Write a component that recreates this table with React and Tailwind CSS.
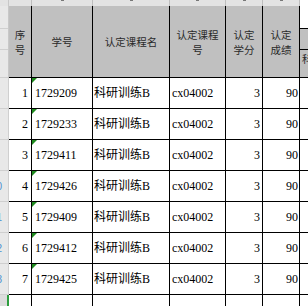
import React from "react";

const widths = ["w-[23px]", "w-[61px]", "w-[77px]", "w-[56px]", "w-[37px]", "w-[37px]"];

const rows = [
  ["1", "1729209"],
  ["2", "1729233"],
  ["3", "1729411"],
  ["4", "1729426"],
  ["5", "1729409"],
  ["6", "1729412"],
  ["7", "1729425"],
];

const serif = "font-['Liberation_Serif','Noto_Sans_CJK_SC',serif]";

function Tri() {
  return (
    <svg className="absolute left-0 top-0" width="5" height="5" viewBox="0 0 5 5">
      <polygon points="0,0 5,0 0,5" fill="#1e8a1e" />
    </svg>
  );
}

export default function App() {
  return (
    <div className="w-[308px] h-[306px] overflow-hidden bg-white flex flex-col font-['Noto_Sans_CJK_SC',sans-serif]">
      {/* column header strip */}
      <div className="flex h-[6px] shrink-0 bg-[#e3e3e3]">
        <div className="w-[9px] shrink-0 border-r border-[#c8c8c8]" />
        <div className="w-[23px] shrink-0 border-r border-[#bdbdbd]" />
        <div className="w-[61px] shrink-0 border-r border-[#bdbdbd] flex justify-center">
          <div className="w-[3px] h-[1px] bg-[#777]" />
        </div>
        <div className="w-[77px] shrink-0 border-r border-[#bdbdbd] flex justify-center">
          <div className="w-[3px] h-[1px] bg-[#777]" />
        </div>
        <div className="w-[56px] shrink-0 border-r border-[#bdbdbd] flex justify-center">
          <div className="w-[3px] h-[1px] bg-[#777]" />
        </div>
        <div className="w-[37px] shrink-0 border-r border-[#bdbdbd] flex justify-center">
          <div className="w-[3px] h-[1px] bg-[#777]" />
        </div>
        <div className="w-[37px] shrink-0 border-r border-[#bdbdbd] flex justify-center">
          <div className="w-[3px] h-[1px] bg-[#777]" />
        </div>
        <div className="flex-1 bg-white" />
      </div>

      {/* header block */}
      <div className="flex h-[72px] shrink-0 text-[10.5px] leading-[15px] text-[#2a2a2a]">
        <div className="w-[9px] shrink-0 flex flex-col bg-[#e8e8e8] border-r border-[#c8c8c8]">
          <div className="h-[23px] border-b border-[#cfcfcf]" />
          <div className="h-[21px] border-b border-[#cfcfcf]" />
          <div className="flex-1 border-b border-[#cfcfcf]" />
        </div>
        <div className="w-[23px] shrink-0 bg-[#c0c0c0] border-r border-b border-black flex items-center justify-center text-center">
          序<br />号
        </div>
        <div className="w-[61px] shrink-0 bg-[#c0c0c0] border-r border-b border-black flex items-center justify-center">
          学号
        </div>
        <div className="w-[77px] shrink-0 bg-[#c0c0c0] border-r border-b border-black flex items-center justify-center">
          认定课程名
        </div>
        <div className="w-[56px] shrink-0 bg-[#c0c0c0] border-r border-b border-black flex items-center justify-center text-center">
          认定课程<br />号
        </div>
        <div className="w-[37px] shrink-0 bg-[#c0c0c0] border-r border-b border-black flex items-center justify-center text-center">
          认定<br />学分
        </div>
        <div className="w-[37px] shrink-0 bg-[#c0c0c0] border-r border-b border-black flex items-center justify-center text-center">
          认定<br />成绩
        </div>
        <div className="flex-1 flex flex-col">
          <div className="h-[23px] bg-white border-b border-black" />
          <div className="h-[21px] bg-[#c0c0c0] border-b border-black" />
          <div className="flex-1 bg-[#c0c0c0] border-b border-black pl-[2px] pt-[1px] whitespace-nowrap overflow-hidden">
            科研
          </div>
        </div>
      </div>

      {/* data rows */}
      {rows.map(([n, id], i) => (
        <div key={n} className={`flex h-[31px] shrink-0 text-[12px] text-black ${serif}`}>
          <div className="w-[9px] shrink-0 bg-[#e8e8e8] border-r border-b border-[#cfcfcf] overflow-hidden flex items-center justify-end">
            {i >= 3 ? (
              <span className="mr-[6px] text-[10px] text-[#4a8fd0] font-['Liberation_Sans',sans-serif]">{i + 7}</span>
            ) : null}
          </div>
          <div className="w-[23px] shrink-0 border-r border-b border-black flex items-center justify-end pr-[3px]">
            {n}
          </div>
          <div className="relative w-[61px] shrink-0 border-r border-b border-black flex items-center pl-[3px]">
            <Tri />
            {id}
          </div>
          <div className="w-[77px] shrink-0 border-r border-b border-black flex items-center pl-[1px] whitespace-nowrap">
            科研训练B
          </div>
          <div className="w-[56px] shrink-0 border-r border-b border-black flex items-center pl-[2px]">
            cx04002
          </div>
          <div className="w-[37px] shrink-0 border-r border-b border-black flex items-center justify-end pr-[2px]">
            3
          </div>
          <div className="w-[37px] shrink-0 border-r border-b border-black flex items-center justify-end pr-[1px]">
            90
          </div>
          <div className="flex-1 border-b border-black" />
        </div>
      ))}

      {/* last partial row */}
      <div className="flex h-[31px] shrink-0">
        <div className="w-[9px] shrink-0 bg-[#dcdcdc] border-r-2 border-[#2e9e3e]" />
        {widths.map((w, i) => (
          <div key={i} className={`${w} shrink-0 border-r border-black`} />
        ))}
        <div className="flex-1" />
      </div>
    </div>
  );
}
